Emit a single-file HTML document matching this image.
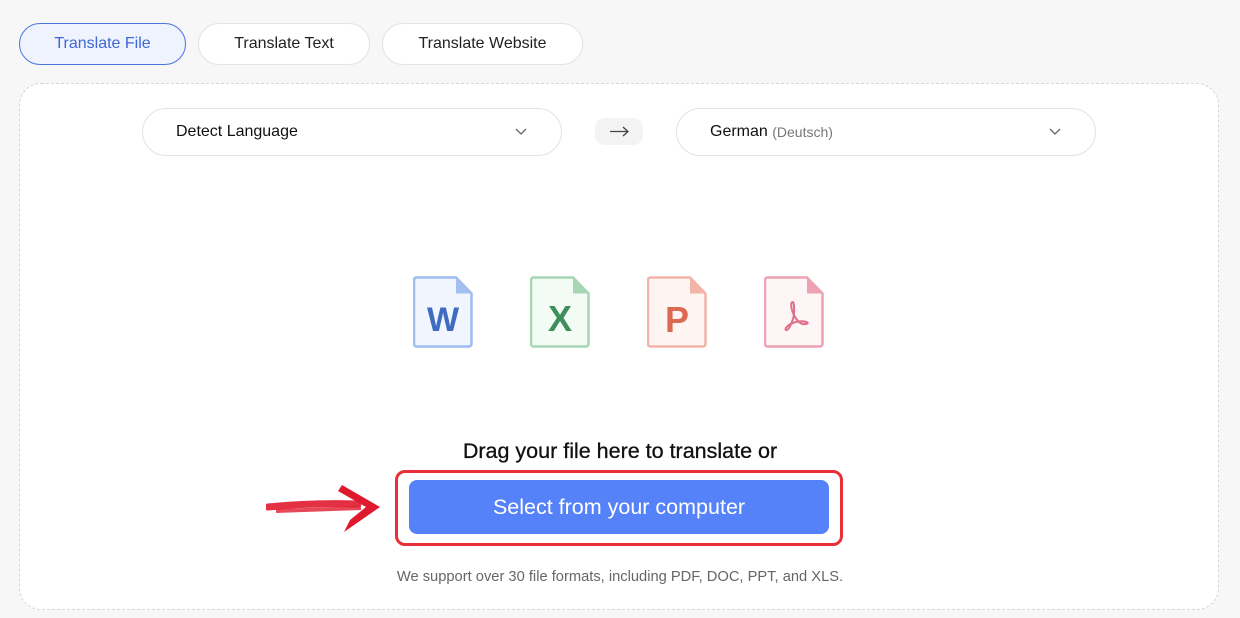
<!DOCTYPE html>
<html><head><meta charset="utf-8"><style>
*{box-sizing:border-box;margin:0;padding:0}
body{width:1240px;height:618px;background:#f7f7f7;font-family:"Liberation Sans",sans-serif;position:relative;overflow:hidden;color:#111}
.tab{position:absolute;top:23px;height:42px;border:1px solid #e2e2e2;background:#fff;border-radius:21px;display:flex;align-items:center;justify-content:center;font-size:16px;color:#222}
.box{position:absolute;left:19px;top:83px;width:1200px;height:527px;background:#fff;border:1px dashed #d6d6d6;border-radius:22px}
.dd{position:absolute;top:108px;height:48px;width:420px;border:1px solid #e2e2e2;border-radius:24px;background:#fff;font-size:16px;display:flex;align-items:center;padding-left:33px}
.dd svg{position:absolute;right:34px;top:19px}
.ic{position:absolute;top:276px}
</style></head><body>
<div class="tab" style="left:19px;width:167px;background:#eef3fe;border-color:#4d74dc;color:#3e66d8">Translate File</div>
<div class="tab" style="left:198px;width:172px">Translate Text</div>
<div class="tab" style="left:382px;width:201px">Translate Website</div>
<div class="box"></div>
<div class="dd" style="left:142px">Detect Language<svg width="12" height="8" viewBox="0 0 12 8"><path d="M1 1l5 5 5-5" fill="none" stroke="#666" stroke-width="1.3"/></svg></div>
<div style="position:absolute;left:595px;top:118px;width:48px;height:27px;background:#f3f3f3;border-radius:10px"><svg width="48" height="27"><path d="M15 13.5h18M28 9l5 4.5-5 4.5" fill="none" stroke="#444" stroke-width="1.3"/></svg></div>
<div class="dd" style="left:676px">German&nbsp;<span style="color:#777;font-size:14px">(Deutsch)</span><svg width="12" height="8" viewBox="0 0 12 8"><path d="M1 1l5 5 5-5" fill="none" stroke="#666" stroke-width="1.3"/></svg></div>

<svg class="ic" style="left:413px" width="60" height="72"><path d="M3 1.5h40l15.5 16V68a2.5 2.5 0 0 1-2.5 2.5H3.5A2.5 2.5 0 0 1 1 68V4a2.5 2.5 0 0 1 2-2.5z" fill="#f0f5fe" stroke="#9fbcee" stroke-width="2.5"/><path d="M43 2v15.5h15.5z" fill="#a3c0f0"/><text x="30" y="55" text-anchor="middle" font-family="Liberation Sans" font-weight="bold" font-size="34" fill="#3f6bc0">W</text></svg>
<svg class="ic" style="left:530px" width="60" height="72"><path d="M3 1.5h40l15.5 16V68a2.5 2.5 0 0 1-2.5 2.5H3.5A2.5 2.5 0 0 1 1 68V4a2.5 2.5 0 0 1 2-2.5z" fill="#f3fbf5" stroke="#a6d6b4" stroke-width="2.5"/><path d="M43 2v15.5h15.5z" fill="#a6d6b4"/><text x="30" y="55" text-anchor="middle" font-family="Liberation Sans" font-weight="bold" font-size="36" fill="#3f8f5e">X</text></svg>
<svg class="ic" style="left:647px" width="60" height="72"><path d="M3 1.5h40l15.5 16V68a2.5 2.5 0 0 1-2.5 2.5H3.5A2.5 2.5 0 0 1 1 68V4a2.5 2.5 0 0 1 2-2.5z" fill="#fef5f2" stroke="#f0b5a8" stroke-width="2.5"/><path d="M43 2v15.5h15.5z" fill="#f0b5a8"/><text x="30" y="56" text-anchor="middle" font-family="Liberation Sans" font-weight="bold" font-size="36" fill="#dc6a52">P</text></svg>
<svg class="ic" style="left:764px" width="60" height="72"><path d="M3 1.5h40l15.5 16V68a2.5 2.5 0 0 1-2.5 2.5H3.5A2.5 2.5 0 0 1 1 68V4a2.5 2.5 0 0 1 2-2.5z" fill="#fef5f7" stroke="#eca2b3" stroke-width="2.5"/><path d="M43 2v15.5h15.5z" fill="#eca2b3"/><path d="M29 26c-3 0-2 7 1 13s7 10 12 9-2-4-10-2-12 7-10 8 5-5 7-11 1-17 0-17z" fill="none" stroke="#e0708a" stroke-width="2"/></svg>

<div style="position:absolute;left:0;width:1240px;top:439px;text-align:center;font-size:21.5px;color:#111;-webkit-text-stroke:0.3px #111">Drag your file here to translate or</div>
<div style="position:absolute;left:395px;top:470px;width:448px;height:76px;border:3px solid #e8303a;border-radius:10px"></div>
<div style="position:absolute;left:409px;top:480px;width:420px;height:54px;background:#5582f8;border-radius:8px;color:#fff;font-size:21.5px;display:flex;align-items:center;justify-content:center">Select from your computer</div>
<svg style="position:absolute;left:266px;top:480px" width="120" height="56"><path d="M2 27c30-3 60-4 90-3" stroke="#e01a2e" stroke-width="7" fill="none" stroke-linecap="round" opacity=".9"/><path d="M10 31c25-1 55-2 85-3" stroke="#e01a2e" stroke-width="4" fill="none" opacity=".8"/><path d="M76 5l38 22-36 25 6-12 16-13-28-16z" fill="#e01a2e"/></svg>
<div style="position:absolute;left:0;width:1240px;top:569px;text-align:center;font-size:14.7px;color:#666">We support over 30 file formats, including PDF, DOC, PPT, and XLS.</div>
</body></html>
